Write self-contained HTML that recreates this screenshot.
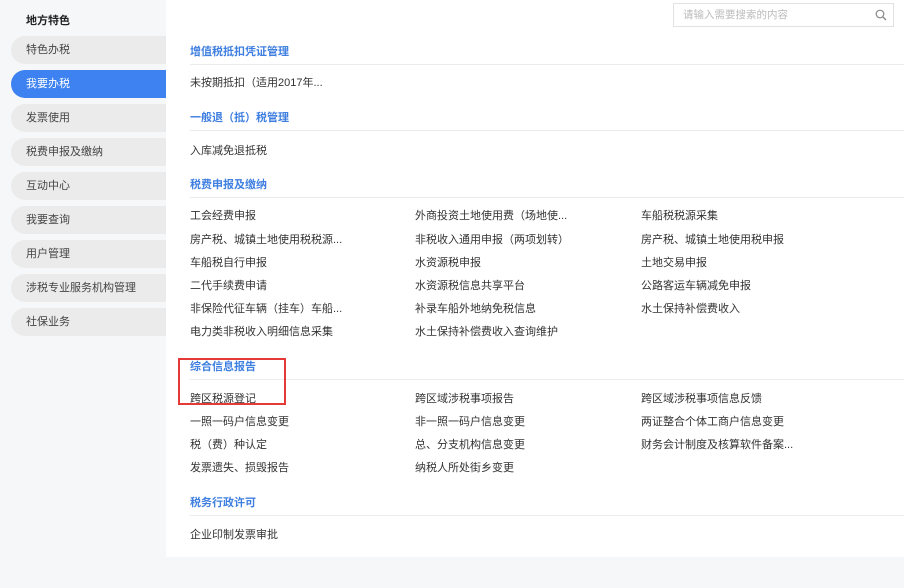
<!DOCTYPE html>
<html><head><meta charset="utf-8"><style>
*{margin:0;padding:0;box-sizing:border-box}
body{width:904px;height:588px;position:relative;background:#fff;font-family:"Liberation Sans","Noto Sans CJK SC",sans-serif;font-size:11px;color:#333;overflow:hidden}
.side{position:absolute;left:0;top:0;width:166px;height:588px;background:#f6f7f9}
.side .h{position:absolute;left:26px;top:12px;font-weight:bold;color:#222}
.pill{position:absolute;left:11px;width:155px;height:28px;border-radius:14px 0 0 14px;background:#ebebeb;color:#444;line-height:28px;padding-left:15px}
.pill.a{background:#3d82f0;color:#fff}
.bot{position:absolute;left:166px;top:557px;width:738px;height:31px;background:#f6f7f9}
.t{position:absolute;left:190px;color:#3f7fe0;font-weight:bold}
.ln{position:absolute;left:190px;width:714px;height:1px;background:#ececec}
.i{position:absolute;color:#333;white-space:nowrap}
.search{position:absolute;left:673px;top:3px;width:221px;height:24px;border:1px solid #e2e2e2;color:#bbb;line-height:22px;padding-left:9px;font-size:10.5px}
.red{position:absolute;left:178px;top:358px;width:108px;height:47px;border:2px solid #e53935}
</style></head><body>
<div class="side">
<div class="h">地方特色</div>
<div class="pill" style="top:36px">特色办税</div>
<div class="pill a" style="top:70px">我要办税</div>
<div class="pill" style="top:104px">发票使用</div>
<div class="pill" style="top:138px">税费申报及缴纳</div>
<div class="pill" style="top:172px">互动中心</div>
<div class="pill" style="top:206px">我要查询</div>
<div class="pill" style="top:240px">用户管理</div>
<div class="pill" style="top:274px">涉税专业服务机构管理</div>
<div class="pill" style="top:308px">社保业务</div>
</div>
<div class="search">请输入需要搜索的内容
<svg style="position:absolute;right:6px;top:5px" width="12" height="12" viewBox="0 0 12 12"><circle cx="5" cy="5" r="3.8" fill="none" stroke="#888" stroke-width="1.2"/><path d="M8 8l3 3" stroke="#888" stroke-width="1.3"/></svg></div>

<div class="t" style="top:43px">增值税抵扣凭证管理</div><div class="ln" style="top:64px"></div>
<div class="i" style="left:190px;top:74px">未按期抵扣（适用2017年...</div>
<div class="t" style="top:109px">一般退（抵）税管理</div><div class="ln" style="top:130px"></div>
<div class="i" style="left:190px;top:142px">入库减免退抵税</div>
<div class="t" style="top:176px">税费申报及缴纳</div><div class="ln" style="top:197px"></div>

<div class="i" style="left:190px;top:207px">工会经费申报</div>
<div class="i" style="left:415px;top:207px">外商投资土地使用费（场地使...</div>
<div class="i" style="left:641px;top:207px">车船税税源采集</div>
<div class="i" style="left:190px;top:231px">房产税、城镇土地使用税税源...</div>
<div class="i" style="left:415px;top:231px">非税收入通用申报（两项划转）</div>
<div class="i" style="left:641px;top:231px">房产税、城镇土地使用税申报</div>
<div class="i" style="left:190px;top:254px">车船税自行申报</div>
<div class="i" style="left:415px;top:254px">水资源税申报</div>
<div class="i" style="left:641px;top:254px">土地交易申报</div>
<div class="i" style="left:190px;top:277px">二代手续费申请</div>
<div class="i" style="left:415px;top:277px">水资源税信息共享平台</div>
<div class="i" style="left:641px;top:277px">公路客运车辆减免申报</div>
<div class="i" style="left:190px;top:300px">非保险代征车辆（挂车）车船...</div>
<div class="i" style="left:415px;top:300px">补录车船外地纳免税信息</div>
<div class="i" style="left:641px;top:300px">水土保持补偿费收入</div>
<div class="i" style="left:190px;top:323px">电力类非税收入明细信息采集</div>
<div class="i" style="left:415px;top:323px">水土保持补偿费收入查询维护</div>

<div class="t" style="top:358px">综合信息报告</div><div class="ln" style="top:379px"></div>
<div class="i" style="left:190px;top:390px">跨区税源登记</div>
<div class="i" style="left:415px;top:390px">跨区域涉税事项报告</div>
<div class="i" style="left:641px;top:390px">跨区域涉税事项信息反馈</div>
<div class="i" style="left:190px;top:413px">一照一码户信息变更</div>
<div class="i" style="left:415px;top:413px">非一照一码户信息变更</div>
<div class="i" style="left:641px;top:413px">两证整合个体工商户信息变更</div>
<div class="i" style="left:190px;top:436px">税（费）种认定</div>
<div class="i" style="left:415px;top:436px">总、分支机构信息变更</div>
<div class="i" style="left:641px;top:436px">财务会计制度及核算软件备案...</div>
<div class="i" style="left:190px;top:459px">发票遗失、损毁报告</div>
<div class="i" style="left:415px;top:459px">纳税人所处街乡变更</div>
<div class="red"></div>

<div class="t" style="top:494px">税务行政许可</div><div class="ln" style="top:515px"></div>
<div class="i" style="left:190px;top:526px">企业印制发票审批</div>
<div class="bot"></div>
</body></html>
